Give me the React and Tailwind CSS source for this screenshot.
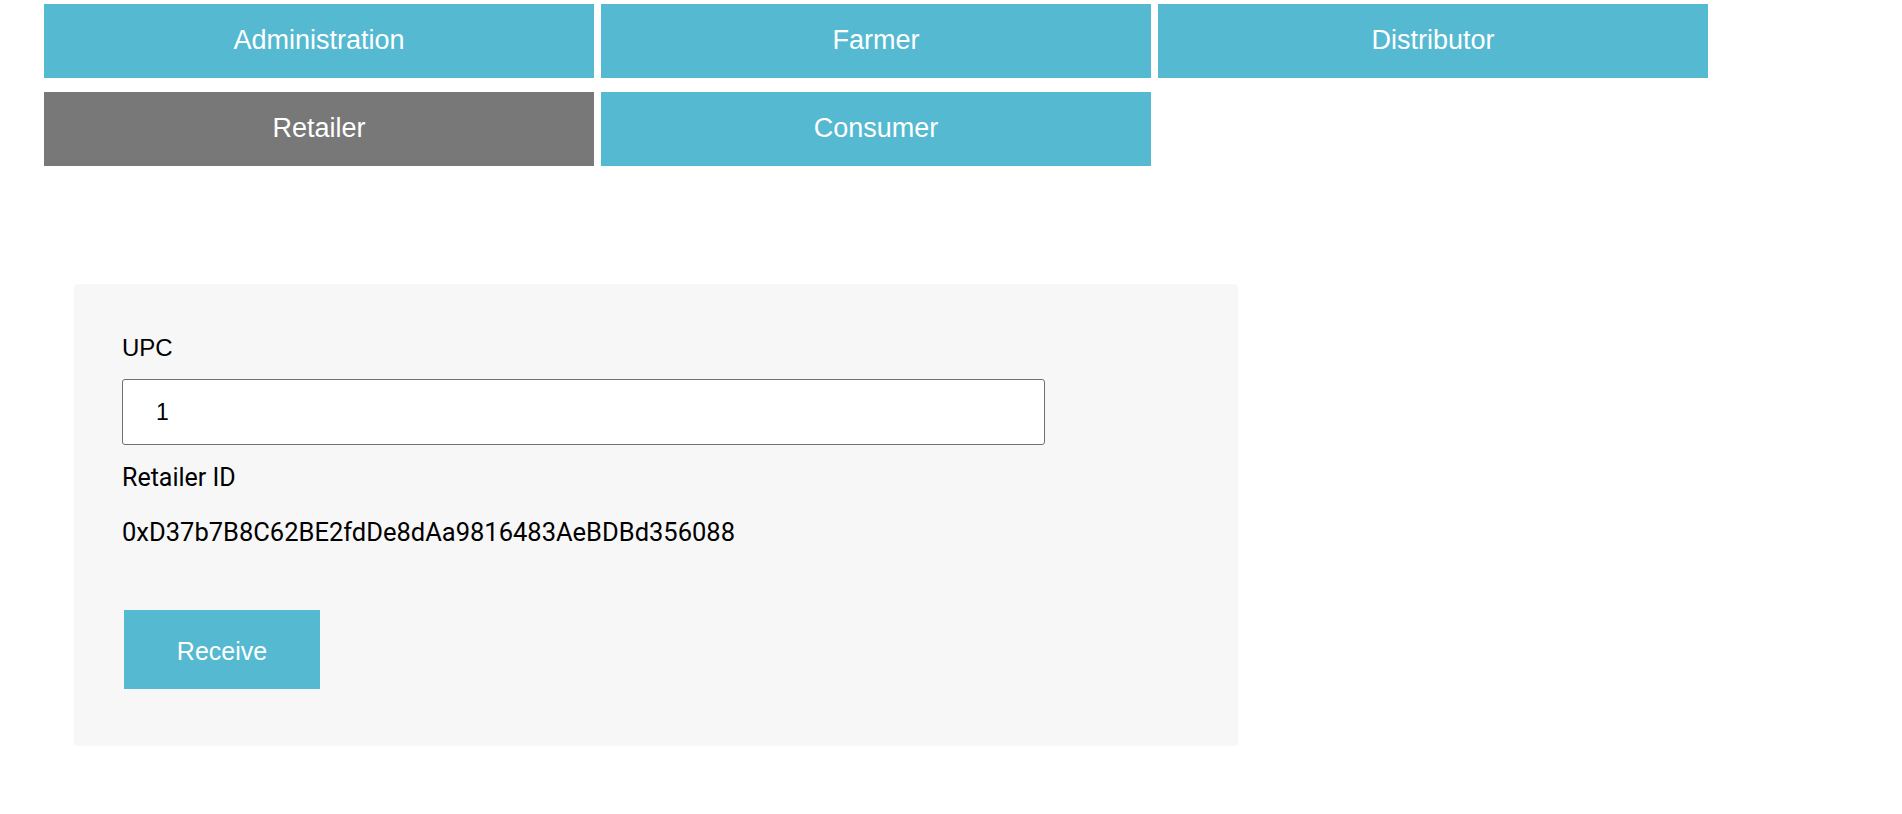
const tabs = [
  [
    { label: 'Administration', active: false },
    { label: 'Farmer', active: false },
    { label: 'Distributor', active: false },
  ],
  [
    { label: 'Retailer', active: true },
    { label: 'Consumer', active: false },
  ],
];

function Tab({ label, active }) {
  return (
    <button
      className={`w-[550px] h-[74px] pb-[2px] flex items-center justify-center text-white text-[27px] font-['Liberation_Sans',Arial,sans-serif] ${
        active ? 'bg-[#787878]' : 'bg-[#54b9d1]'
      }`}
    >
      {label}
    </button>
  );
}

export default function App() {
  return (
    <div className="min-h-screen bg-white text-black">
      {/* role tabs */}
      <div className="pt-[4px] pl-[44px] flex flex-col gap-[14px]">
        {tabs.map((row, i) => (
          <div key={i} className="flex gap-[7px]">
            {row.map((t) => (
              <Tab key={t.label} label={t.label} active={t.active} />
            ))}
          </div>
        ))}
      </div>

      {/* retailer form */}
      <div className="ml-[74px] mt-[118px] w-[1164px] h-[462px] rounded-[4px] bg-[#f7f7f7] pt-[50px] pl-[48px]">
        <div className="text-[24px] leading-[27px] font-['Liberation_Sans',Arial,sans-serif]">UPC</div>
        <input
          type="text"
          defaultValue="1"
          className="mt-[18px] block w-[923px] h-[66px] bg-white border-[1.5px] border-[#707070] rounded-[3px] pl-[33px] text-[23px] font-['Liberation_Sans',Arial,sans-serif] outline-none"
        />
        <div className="mt-[18px] text-[25px] leading-[29px] font-['Roboto',sans-serif]">Retailer ID</div>
        <div className="mt-[26px] text-[25.5px] leading-[29px] font-['Roboto',sans-serif]">
          0xD37b7B8C62BE2fdDe8dAa9816483AeBDBd356088
        </div>
        <button className="mt-[63px] ml-[2px] w-[196px] h-[79px] pt-[4px] bg-[#54b9d1] text-white text-[25px] font-['Liberation_Sans',Arial,sans-serif]">
          Receive
        </button>
      </div>
    </div>
  );
}
